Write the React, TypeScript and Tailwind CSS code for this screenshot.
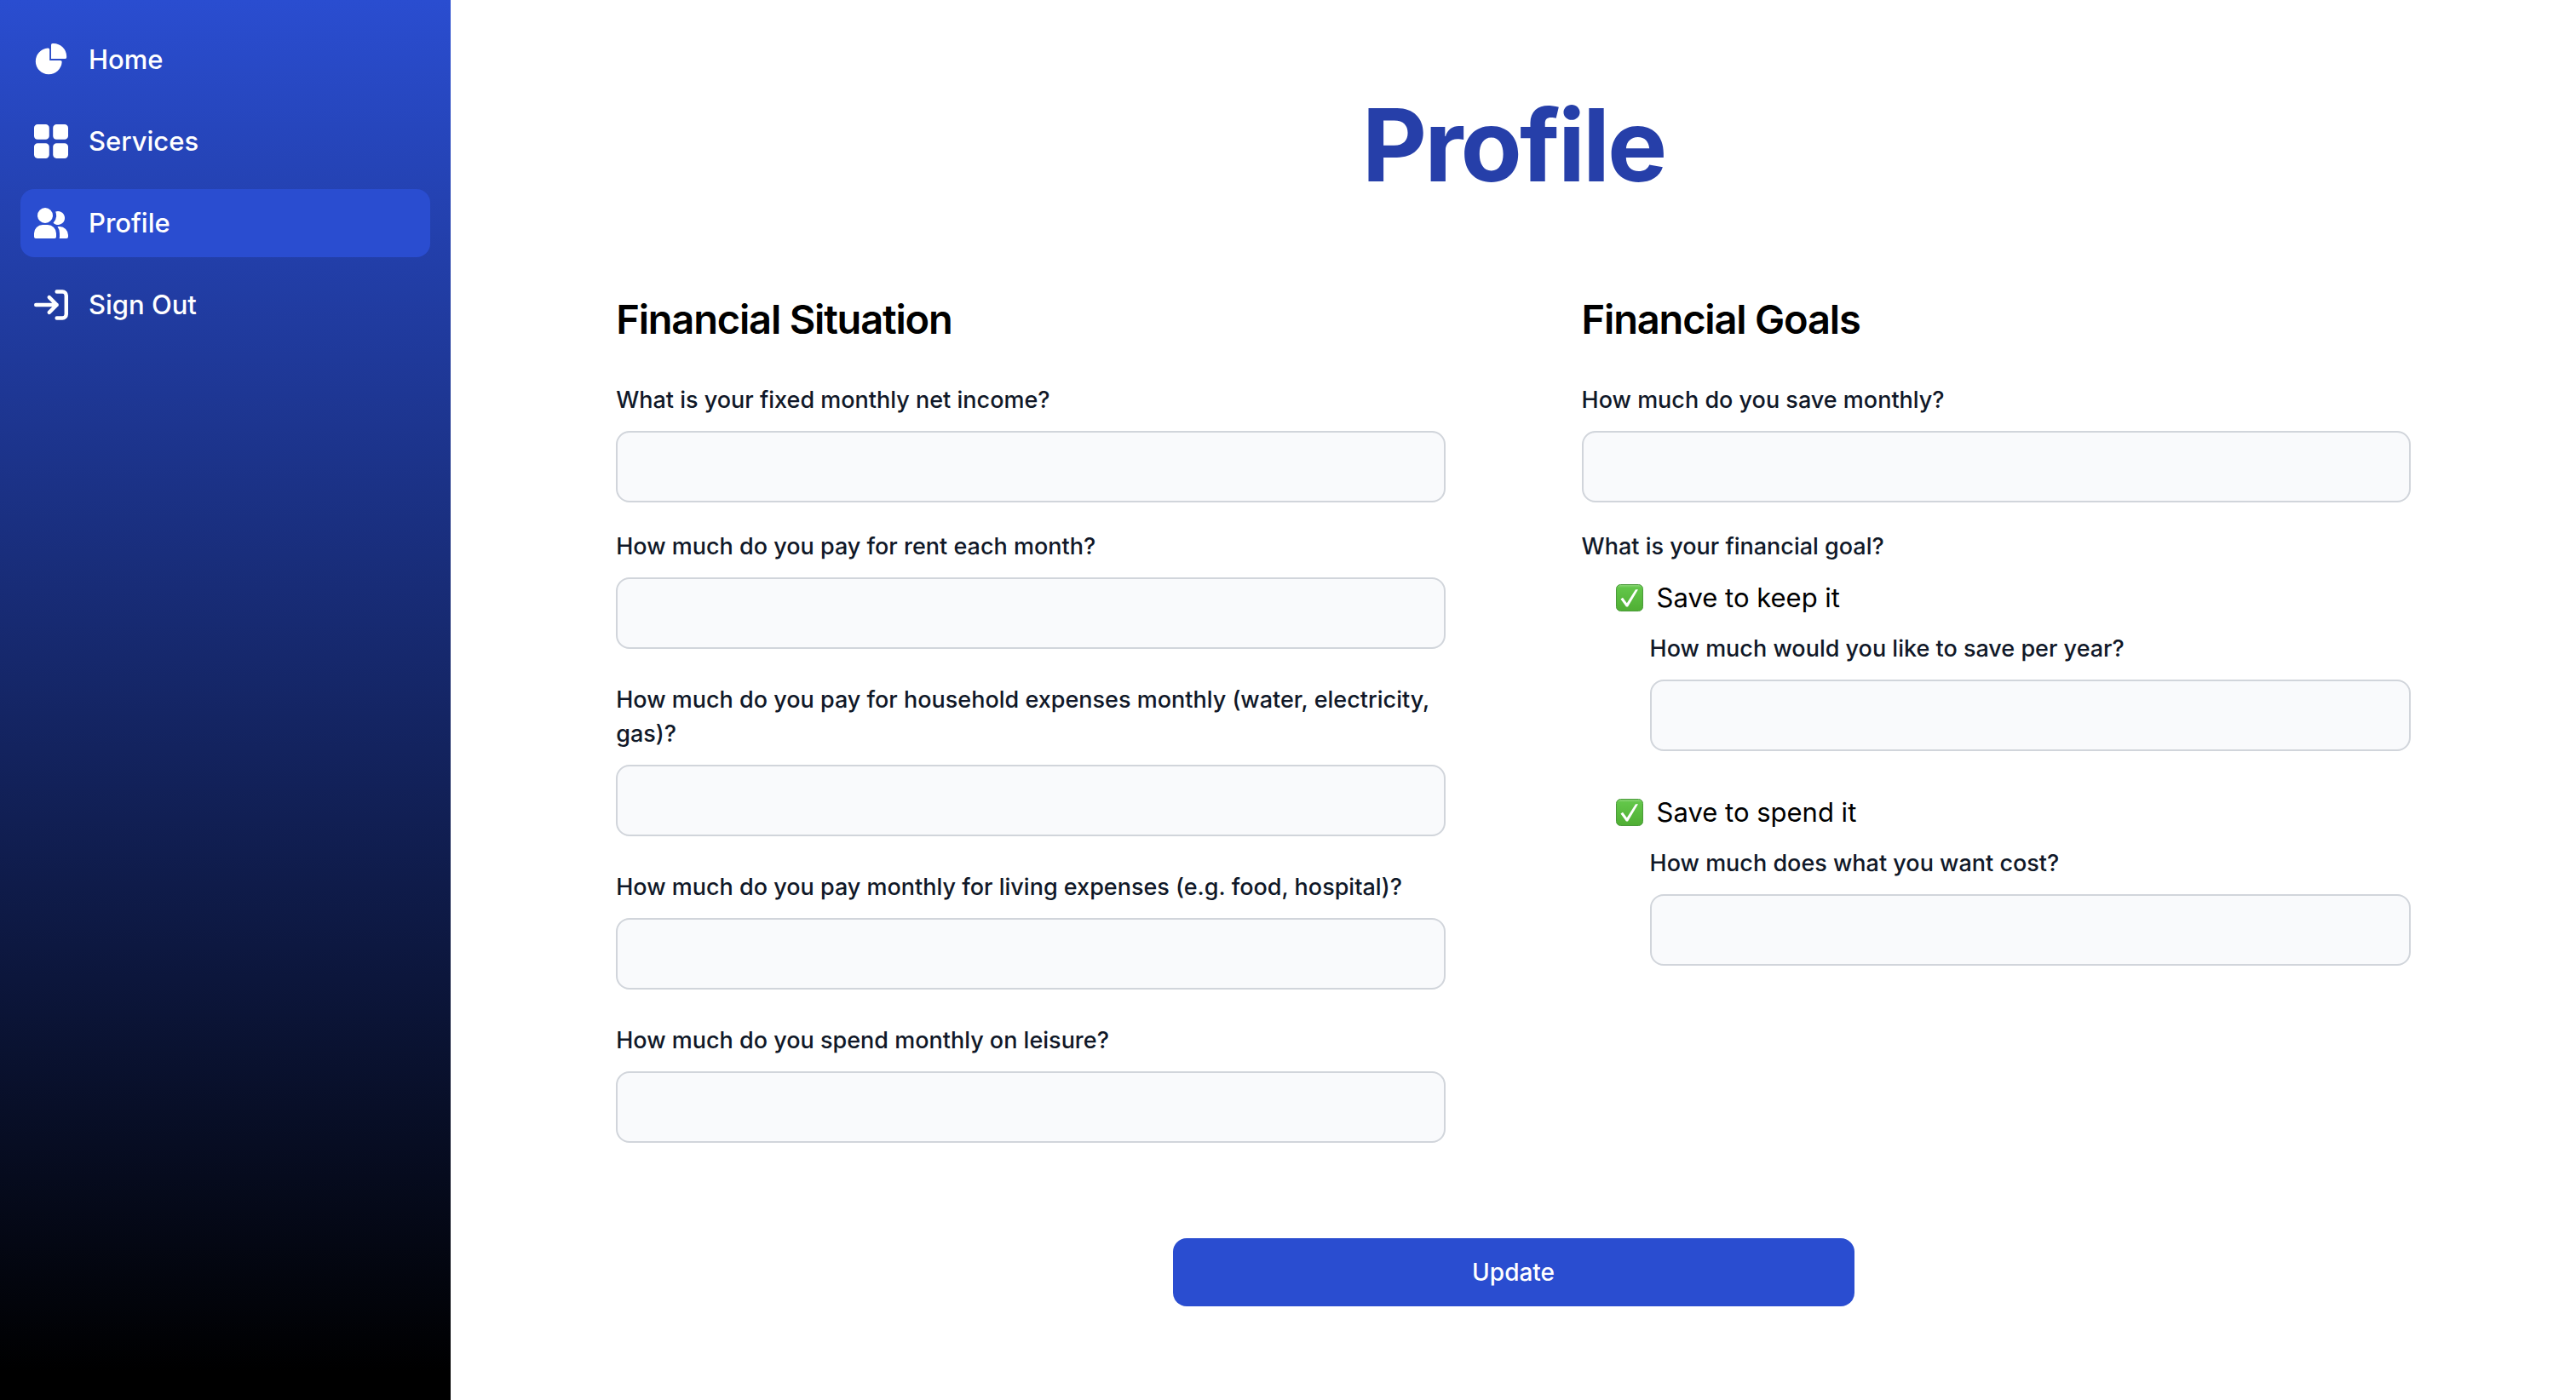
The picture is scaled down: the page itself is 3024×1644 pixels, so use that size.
import React, { useId } from "react";

type FieldProps = { label: string };

function Field({ label }: FieldProps) {
  const id = useId();
  return (
    <div className="flex flex-col gap-4">
      <label htmlFor={id} className="text-[27px] leading-10 font-medium text-gray-900">
        {label}
      </label>
      <input
        id={id}
        type="text"
        className="h-21 w-full rounded-2xl border-2 border-[#d1d5db] bg-[#f9fafc] px-5 text-[27px] text-gray-900"
      />
    </div>
  );
}

function CheckMark() {
  return (
    <svg viewBox="0 0 32 32" className="size-8" aria-hidden="true">
      <defs>
        <linearGradient id="check-fill" x1="0" y1="0" x2="0" y2="1">
          <stop offset="0" stopColor="#8fd67c" />
          <stop offset="0.12" stopColor="#62c649" />
          <stop offset="1" stopColor="#4fae33" />
        </linearGradient>
      </defs>
      <rect x="0.5" y="0.5" width="31" height="31" rx="5" fill="url(#check-fill)" stroke="#4a9a3a" />
      <path d="M5.5 17.5 8 15.8l4.8 6.4L23 6.2h3L14 26.5h-2Z" fill="#fff" />
    </svg>
  );
}

function Goal({ title, question }: { title: string; question: string }) {
  return (
    <div className="flex flex-col gap-4">
      <div className="flex items-center gap-4 pl-10 text-[31px] leading-12 text-black">
        <CheckMark />
        <span>{title}</span>
      </div>
      <div className="pl-20">
        <Field label={question} />
      </div>
    </div>
  );
}

const navItems = [
  {
    label: "Home",
    viewBox: "0 0 22 21",
    icon: (
      <g fill="currentColor">
        <path d="M16.975 11H10V4.025a1 1 0 0 0-1.066-.998 8.5 8.5 0 1 0 9.039 9.039.999.999 0 0 0-1-1.066h.002Z" />
        <path d="M12.5 0c-.157 0-.311.01-.565.027A1 1 0 0 0 11 1.02V10h8.975a1 1 0 0 0 1-.935c.013-.188.028-.374.028-.565A8.51 8.51 0 0 0 12.5 0Z" />
      </g>
    ),
  },
  {
    label: "Services",
    viewBox: "0 0 18 18",
    icon: (
      <path
        fill="currentColor"
        d="M6.143 0H1.857A1.857 1.857 0 0 0 0 1.857v4.286C0 7.169.831 8 1.857 8h4.286A1.857 1.857 0 0 0 8 6.143V1.857A1.857 1.857 0 0 0 6.143 0Zm10 0h-4.286A1.857 1.857 0 0 0 10 1.857v4.286C10 7.169 10.831 8 11.857 8h4.286A1.857 1.857 0 0 0 18 6.143V1.857A1.857 1.857 0 0 0 16.143 0Zm-10 10H1.857A1.857 1.857 0 0 0 0 11.857v4.286C0 17.169.831 18 1.857 18h4.286A1.857 1.857 0 0 0 8 16.143v-4.286A1.857 1.857 0 0 0 6.143 10Zm10 0h-4.286A1.857 1.857 0 0 0 10 11.857v4.286c0 1.026.831 1.857 1.857 1.857h4.286A1.857 1.857 0 0 0 18 16.143v-4.286A1.857 1.857 0 0 0 16.143 10Z"
      />
    ),
  },
  {
    label: "Profile",
    viewBox: "0 0 20 18",
    active: true,
    icon: (
      <path
        fill="currentColor"
        d="M14 2a3.963 3.963 0 0 0-1.4.267 6.439 6.439 0 0 1-1.331 6.638A4 4 0 1 0 14 2Zm1 9h-1.264A6.957 6.957 0 0 1 15 15v2a2.97 2.97 0 0 1-.184 1H19a1 1 0 0 0 1-1v-1a5.006 5.006 0 0 0-5-5ZM6.5 9a4.5 4.5 0 1 0 0-9 4.5 4.5 0 0 0 0 9ZM8 10H5a5.006 5.006 0 0 0-5 5v2a1 1 0 0 0 1 1h11a1 1 0 0 0 1-1v-2a5.006 5.006 0 0 0-5-5Z"
      />
    ),
  },
  {
    label: "Sign Out",
    viewBox: "0 0 18 16",
    icon: (
      <path
        fill="none"
        stroke="currentColor"
        strokeLinecap="round"
        strokeLinejoin="round"
        strokeWidth="2"
        d="M1 8h11m0 0L8 4m4 4-4 4m4-11h3a2 2 0 0 1 2 2v10a2 2 0 0 1-2 2h-3"
      />
    ),
  },
];

function Sidebar() {
  return (
    <aside className="w-[17.5%] shrink-0 bg-linear-to-b/srgb from-[#2a4dd0] to-black to-98% px-6 py-[30px]">
      <nav>
        <ul className="flex flex-col gap-4">
          {navItems.map((item) => (
            <li key={item.label}>
              <a
                href="#"
                aria-current={item.active ? "page" : undefined}
                className={
                  item.active
                    ? "flex items-center gap-6 rounded-2xl bg-[#2a4dd0] p-4"
                    : "flex items-center gap-6 rounded-2xl p-4"
                }
              >
                <svg viewBox={item.viewBox} className="size-10" aria-hidden="true">
                  {item.icon}
                </svg>
                <span className="text-[31px] leading-12 font-medium text-white">{item.label}</span>
              </a>
            </li>
          ))}
        </ul>
      </nav>
    </aside>
  );
}

export default function App() {
  return (
    <div className="flex min-h-screen bg-white font-['Inter',sans-serif] text-white">
      <Sidebar />
      <main className="flex-1 px-[194px] pt-[110px] pb-24">
        <h1 className="text-center text-[118px] leading-[120px] font-bold tracking-tight text-[#263fa9]">
          Profile
        </h1>
        <form className="mt-[114px] flex flex-col items-center gap-28">
          <div className="grid w-full grid-cols-2 items-start gap-40">
            <section className="flex flex-col">
              <h2 className="mb-11 text-[47px] leading-[62px] font-semibold tracking-tight text-black">
                Financial Situation
              </h2>
              <div className="flex flex-col gap-10">
                <div className="flex flex-col gap-8">
                  <Field label="What is your fixed monthly net income?" />
                  <Field label="How much do you pay for rent each month?" />
                </div>
                <Field label="How much do you pay for household expenses monthly (water, electricity, gas)?" />
                <Field label="How much do you pay monthly for living expenses (e.g. food, hospital)?" />
                <Field label="How much do you spend monthly on leisure?" />
              </div>
            </section>
            <section className="flex flex-col">
              <h2 className="mb-11 text-[47px] leading-[62px] font-semibold tracking-tight text-black">
                Financial Goals
              </h2>
              <div className="flex flex-col gap-8">
                <Field label="How much do you save monthly?" />
                <fieldset>
                  <legend className="mb-4 text-[27px] leading-10 font-medium text-gray-900">
                    What is your financial goal?
                  </legend>
                  <div className="flex flex-col gap-12">
                    <Goal title="Save to keep it" question="How much would you like to save per year?" />
                    <Goal title="Save to spend it" question="How much does what you want cost?" />
                  </div>
                </fieldset>
              </div>
            </section>
          </div>
          <button
            type="submit"
            className="w-full max-w-200 rounded-2xl bg-[#2a4dd0] py-5 text-[28px] leading-10 font-medium text-white"
          >
            Update
          </button>
        </form>
      </main>
    </div>
  );
}
